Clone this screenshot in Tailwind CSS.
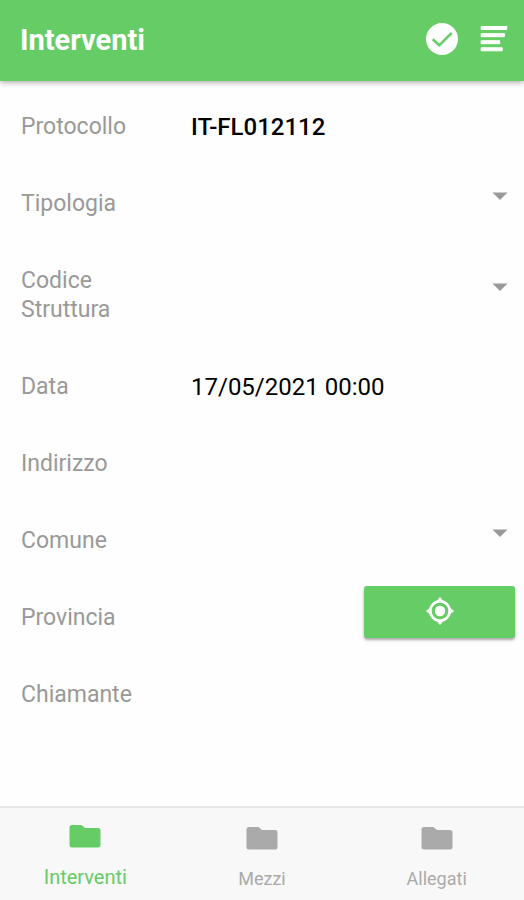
<!DOCTYPE html>
<html lang="it">
<head>
<meta charset="utf-8">
<meta name="viewport" content="width=device-width, initial-scale=1">
<title>Interventi</title>
<script src="https://cdn.jsdelivr.net/npm/@tailwindcss/browser@4"></script>
</head>
<body class="flex min-h-screen flex-col bg-[#fefefe] font-['Roboto',sans-serif] text-2xl text-black">
<header class="flex h-[81px] items-center bg-[#66cc66] pr-4 pb-1 pl-5 text-white shadow-[0_1px_6px_rgba(60,30,50,0.45)]">
  <h1 class="flex-1 pt-1 text-[29px] font-bold">Interventi</h1>
  <button type="button" aria-label="Conferma" class="mr-[22px]">
    <svg class="block size-8" viewBox="0 0 32 32"><circle cx="16" cy="16" r="16" fill="#fff"/><path d="M6.700 16.200l6.600 6.100L25.700 9.800" fill="none" stroke="#66cc66" stroke-width="2.600"/></svg>
  </button>
  <button type="button" aria-label="Menu">
    <svg class="block size-7" viewBox="0 0 28 28" fill="#fff"><path d="M1.200 1.500H27L26.500 4.500H1.200zM1.200 8.700H24.700L24.200 11.700H1.200zM1.200 15.700H19.700V18.700H1.200zM1.200 22.800H22.200V25.800H1.200z" stroke="#fff" stroke-width="1" stroke-linejoin="round"/></svg>
  </button>
</header>
<main class="flex-1 pt-[7px]">
  <form>
    <div class="grid grid-cols-[170px_minmax(0,1fr)] items-center pl-[21px]">
      <label for="protocollo" class="py-6 text-[23px] leading-[29px] text-[#999999]">Protocollo</label>
      <input id="protocollo" value="IT-FL012112" class="w-full min-w-0 font-medium outline-none">
    </div>
    <div class="grid grid-cols-[170px_minmax(0,1fr)] items-center pl-[21px]">
      <label for="tipologia" class="py-6 text-[23px] leading-[29px] text-[#999999]">Tipologia</label>
      <div class="mb-4 flex items-center pr-4">
        <select id="tipologia" class="min-w-0 flex-1 appearance-none outline-none"><option></option></select>
        <svg class="h-2 w-4" viewBox="0 0 16 8"><path d="M0.500 0.500h15L8 8z" fill="#999"/></svg>
      </div>
    </div>
    <div class="grid grid-cols-[170px_minmax(0,1fr)] items-center pl-[21px]">
      <label for="codice" class="py-6 text-[23px] leading-[29px] text-[#999999]">Codice<br>Struttura</label>
      <div class="mb-4 flex items-center pr-4">
        <select id="codice" class="min-w-0 flex-1 appearance-none outline-none"><option></option></select>
        <svg class="h-2 w-4" viewBox="0 0 16 8"><path d="M0.500 0.500h15L8 8z" fill="#999"/></svg>
      </div>
    </div>
    <div class="grid grid-cols-[170px_minmax(0,1fr)] items-center pl-[21px]">
      <label for="data" class="py-6 text-[23px] leading-[29px] text-[#999999]">Data</label>
      <input id="data" value="17/05/2021 00:00" class="w-full min-w-0 outline-none">
    </div>
    <div class="grid grid-cols-[170px_minmax(0,1fr)] items-center pl-[21px]">
      <label for="indirizzo" class="py-6 text-[23px] leading-[29px] text-[#999999]">Indirizzo</label>
      <input id="indirizzo" class="w-full min-w-0 outline-none">
    </div>
    <div class="grid grid-cols-[170px_minmax(0,1fr)] items-center pl-[21px]">
      <label for="comune" class="py-6 text-[23px] leading-[29px] text-[#999999]">Comune</label>
      <div class="mb-4 flex items-center pr-4">
        <select id="comune" class="min-w-0 flex-1 appearance-none outline-none"><option></option></select>
        <svg class="h-2 w-4" viewBox="0 0 16 8"><path d="M0.500 0.500h15L8 8z" fill="#999"/></svg>
      </div>
    </div>
    <div class="grid grid-cols-[170px_minmax(0,1fr)] items-center pl-[21px]">
      <label for="provincia" class="py-6 text-[23px] leading-[29px] text-[#999999]">Provincia</label>
      <div class="mb-3 flex items-center pr-[9px]">
        <input id="provincia" class="min-w-0 flex-1 outline-none">
        <button type="button" aria-label="Posizione" class="flex h-[52px] w-[151px] shrink-0 items-center justify-center rounded-[3px] bg-[#66cc66] shadow-[0_2px_3px_rgba(0,0,0,0.35)]">
          <svg class="mb-0.5 size-7" viewBox="0 0 28 28" fill="#fff"><circle cx="14" cy="14" r="9.700" fill="none" stroke="#fff" stroke-width="2.700"/><circle cx="14" cy="14" r="5.200"/><path d="M13.200 0.500h1.600L17 4H11zM13.200 27.500h1.600L17 24H11zM0.500 13.200v1.600L4 17V11zM27.500 13.200v1.600L24 17V11z"/></svg>
        </button>
      </div>
    </div>
    <div class="grid grid-cols-[170px_minmax(0,1fr)] items-center pl-[21px]">
      <label for="chiamante" class="py-6 text-[23px] leading-[29px] text-[#999999]">Chiamante</label>
      <input id="chiamante" class="w-full min-w-0 outline-none">
    </div>
  </form>
</main>
<nav class="grid h-[94px] grid-cols-3 border-t-2 border-[#e6e6e6] bg-[#f8f8f8] text-lg text-[#aaaaaa]">
  <a href="#interventi" class="flex flex-col items-center pt-4 pr-1 text-xl text-[#66cc66]">
    <svg class="mb-[15px] h-6 w-8" viewBox="0 0 32 24" fill="currentColor"><path d="M3 1H12.500L16 4H29Q31.500 4 31.500 6.500V21Q31.500 23.500 29 23.500H3Q0.500 23.500 0.500 21V3.500Q0.500 1 3 1z"/></svg>
    <span>Interventi</span>
  </a>
  <a href="#mezzi" class="flex flex-col items-center pt-[18px]">
    <svg class="mb-[15px] h-6 w-8" viewBox="0 0 32 24" fill="currentColor"><path d="M3 1H12.500L16 4H29Q31.500 4 31.500 6.500V21Q31.500 23.500 29 23.500H3Q0.500 23.500 0.500 21V3.500Q0.500 1 3 1z"/></svg>
    <span>Mezzi</span>
  </a>
  <a href="#allegati" class="flex flex-col items-center pt-[18px]">
    <svg class="mb-[15px] h-6 w-8" viewBox="0 0 32 24" fill="currentColor"><path d="M3 1H12.500L16 4H29Q31.500 4 31.500 6.500V21Q31.500 23.500 29 23.500H3Q0.500 23.500 0.500 21V3.500Q0.500 1 3 1z"/></svg>
    <span>Allegati</span>
  </a>
</nav>
</body>
</html>
